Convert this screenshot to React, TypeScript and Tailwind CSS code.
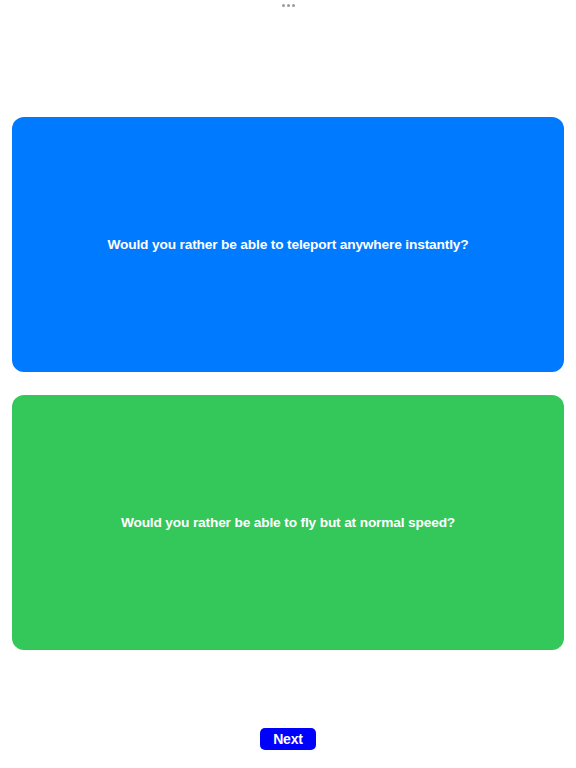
export default function App() {
  return (
    <div className="relative h-[768px] w-full bg-white" style={{ fontFamily: '"Liberation Sans", Arial, sans-serif' }}>
      <div className="absolute left-0 right-0 top-[4px] flex justify-center gap-[2px]">
        <span className="h-[3px] w-[3px] rounded-full bg-[#9a9a9a]" />
        <span className="h-[3px] w-[3px] rounded-full bg-[#9a9a9a]" />
        <span className="h-[3px] w-[3px] rounded-full bg-[#9a9a9a]" />
      </div>
      <div className="flex flex-col items-center pt-[117px]">
        <div className="flex w-full flex-col gap-[23px] px-[12px]">
          <div className="flex h-[255px] items-center justify-center rounded-[12px] bg-[#007AFF] px-4 pt-[2px] text-center">
            <span className="text-[13.7px] font-bold tracking-[-0.15px] text-white">Would you rather be able to teleport anywhere instantly?</span>
          </div>
          <div className="flex h-[255px] items-center justify-center rounded-[12px] bg-[#34C759] px-4 pt-[2px] text-center">
            <span className="text-[13.7px] font-bold tracking-[-0.15px] text-white">Would you rather be able to fly but at normal speed?</span>
          </div>
        </div>
        <button className="mt-[78px] flex h-[22px] w-[56px] items-center justify-center rounded-[5px] bg-[#0000FF] pt-[1px] text-[14px] font-bold tracking-[-0.15px] text-white">
          Next
        </button>
      </div>
    </div>
  );
}
